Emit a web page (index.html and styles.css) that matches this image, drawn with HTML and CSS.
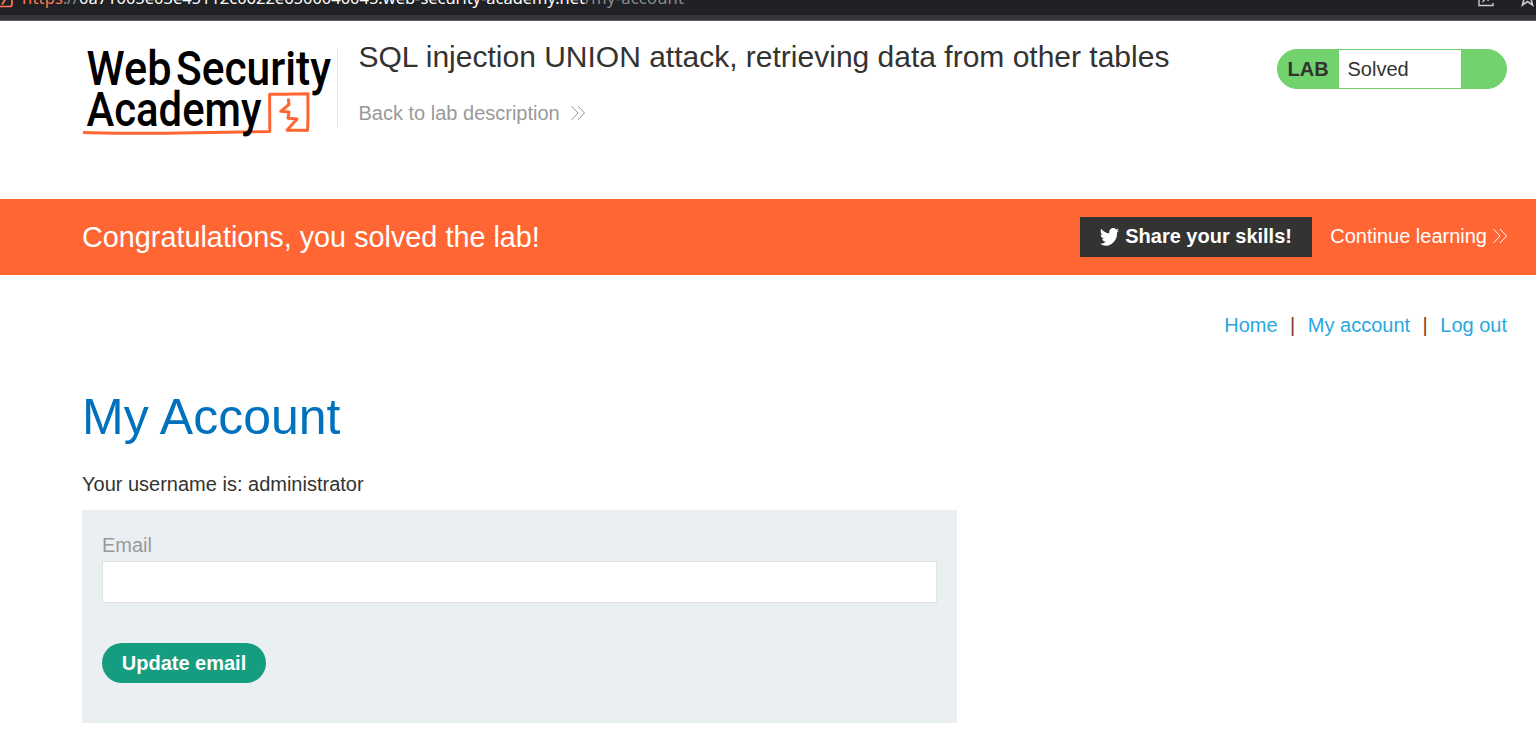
FILE: index.html
```
<!DOCTYPE html>
<html lang="en">
<head>
<meta charset="utf-8">
<title>SQL injection UNION attack, retrieving data from other tables</title>
<link rel="stylesheet" href="styles.css">
</head>
<body>
<div class="browser-bar">
  <svg class="browser-art" viewBox="0 0 1536 15" width="1536" height="15">
    <path d="M-4 6.500H10Q12 6.500 12 4V-3" fill="none" stroke="#ff7a50" stroke-width="1.700"/>
    <path d="M2 4.500L5.500 -1" fill="none" stroke="#ff7a50" stroke-width="1.700"/>
    <text class="url url-scheme" x="22" y="4" textLength="41">https</text>
    <text class="url url-path" x="63" y="4" textLength="16">://</text>
    <text class="url url-host" x="79" y="4" textLength="506">0a71005e03e45112c0622e6500040045.web-security-academy.net</text>
    <text class="url url-path" x="585" y="4" textLength="99">/my-account</text>
    <path d="M1479 -3V5.500H1493V3M1482.500 2L1486 -2M1487 0H1489" fill="none" stroke="#c8c9cb" stroke-width="1.400"/>
    <path d="M1524 -1L1522.500 5L1527.500 1.500L1532.500 5L1531 -1" fill="none" stroke="#c8c9cb" stroke-width="1.700"/>
  </svg>
</div>
<header class="header">
  <svg class="logo" viewBox="82 45 250 92" width="250" height="92" role="img" aria-label="Web Security Academy">
    <path class="logo-line" d="M83 132.600C110 133.800 140 133.500 180 133C215 132.600 240 132 269.800 131.400L269.600 94.300C282 94.600 295 93.700 308 93.700C307.600 106 308.500 118 307.500 130.400C300 130 294 130.700 287 130.200L297 119L288 118.200L289 112L280.700 111.300L289 104.500L288.200 98.500"/>
    <text class="logo-text" x="86.500" y="85.200" textLength="85" lengthAdjust="spacingAndGlyphs">Web</text>
    <text class="logo-text" x="176" y="85.200" textLength="155" lengthAdjust="spacingAndGlyphs">Security</text>
    <text class="logo-text" x="86.500" y="126" textLength="175" lengthAdjust="spacingAndGlyphs">Academy</text>
  </svg>
  <div class="title-box">
    <h2 class="lab-title">SQL injection UNION attack, retrieving data from other tables</h2>
    <a class="back-link">Back to lab description
      <svg class="chevrons" viewBox="0 0 16 16" width="16" height="16"><path d="M1.500 1L8 8L1.500 15M8 1L14.500 8L8 15"/></svg>
    </a>
  </div>
  <div class="lab-status"><b class="lab-label">LAB</b><span class="lab-state">Solved</span></div>
</header>
<section class="banner">
  <h4 class="banner-text">Congratulations, you solved the lab!</h4>
  <a class="share">
    <svg class="bird" viewBox="0 0 24 20" preserveAspectRatio="none" width="19" height="18"><path d="M24 2.400a10 10 0 0 1-2.800.8A5 5 0 0 0 23.300.4a10 10 0 0 1-3.100 1.200 4.900 4.900 0 0 0-8.400 4.500A14 14 0 0 1 1.700.9a4.900 4.900 0 0 0 1.500 6.600A5 5 0 0 1 1 6.900v.1a4.900 4.900 0 0 0 4 4.800 5 5 0 0 1-2.300.1 4.900 4.900 0 0 0 4.600 3.400A10 10 0 0 1 0 17.400a14 14 0 0 0 21.500-12.400A10 10 0 0 0 24 2.400z"/></svg>
    Share your skills!
  </a>
  <a class="continue">Continue learning
    <svg class="chevrons" viewBox="0 0 16 16" width="16" height="16"><path d="M1.500 1L8 8L1.500 15M8 1L14.500 8L8 15"/></svg>
  </a>
</section>
<main class="main">
  <nav class="nav"><a>Home</a><span>|</span><a>My account</a><span>|</span><a>Log out</a></nav>
  <h1 class="heading">My Account</h1>
  <p class="username">Your username is: administrator</p>
  <form class="form">
    <label class="label" for="email">Email</label>
    <input class="input" id="email" type="email">
    <button class="button" type="button">Update email</button>
  </form>
</main>
</body>
</html>
```

FILE: styles.css
```
* { box-sizing: border-box; }
body {
  margin: 0;
  height: 750px;
  overflow: hidden;
  background: #fff;
  color: #333332;
  font-family: "Liberation Sans", Arial, sans-serif;
  font-size: 20px;
  line-height: 24px;
}
h1, h2, h4, p { margin: 0; font-weight: 400; }
.browser-bar {
  height: 21px;
  background: #35363a;
  border-bottom: 1px solid #5b5b60;
}
.browser-art { display: block; background: #202124; }
.url { font-family: "Noto Sans", sans-serif; font-size: 16.5px; }
.url-scheme { fill: #ff7a50; }
.url-host { fill: #fff; }
.url-path { fill: #8b8c8f; }
.header {
  display: flex;
  align-items: flex-start;
  height: 178px;
  padding: 24px 29px 0 82px;
}
.logo { flex: none; }
.logo-text { font-family: Roboto, sans-serif; font-size: 48px; font-weight: 500; fill: #000; }
.logo-line { fill: none; stroke: #ff6633; stroke-width: 3; stroke-linejoin: round; }
.title-box {
  flex: 1;
  height: 79px;
  margin: 4px 0 0 5px;
  padding-left: 20.5px;
  border-left: 1px solid #e5e5e5;
}
.lab-title { margin-top: -10px; font-size: 30px; line-height: 36px; white-space: nowrap; }
.back-link { display: flex; align-items: center; gap: 10px; margin-top: 26px; color: #999; }
.chevrons { fill: none; stroke: currentColor; stroke-width: 1; }
.lab-status {
  display: flex;
  width: 230px;
  height: 40px;
  margin-top: 4px;
  border: 1px solid #72d26e;
  border-radius: 20px;
  background: #72d26e;
  line-height: 39px;
}
.lab-label { width: 61px; padding-left: 9.5px; }
.lab-state { width: 122px; padding-left: 8.5px; background: #fff; }
.banner {
  display: flex;
  align-items: center;
  height: 76px;
  padding: 0 28px 0 82px;
  background: #ff6633;
  color: #fff;
}
.banner-text { flex: 1; font-size: 28.8px; }
.share {
  display: flex;
  align-items: center;
  gap: 6px;
  width: 232px;
  height: 40px;
  padding: 0 0 2px 20px;
  background: #333332;
  font-weight: 700;
  white-space: nowrap;
}
.bird { margin-top: 2px; fill: #fff; }
.continue { display: flex; align-items: center; gap: 5px; margin-left: 18px; padding-bottom: 2px; }
.main { padding: 38px 29px 0 82px; }
.nav { display: flex; justify-content: flex-end; gap: 12.5px; color: #29a7de; }
.nav span { color: #803c20; }
.heading { margin-top: 51px; font-size: 50px; line-height: 58px; color: #0071bc; }
.username { margin-top: 26px; }
.form {
  width: 875px;
  height: 213px;
  margin-top: 14px;
  padding: 23px 20px;
  background: #eaeff2;
}
.label { display: block; color: #999; }
.input { display: block; width: 835px; height: 42px; margin-top: 4px; border: 1px solid #e3e3e3; background: #fff; }
.button {
  display: block;
  width: 164px;
  height: 40px;
  margin-top: 40px;
  border: 0;
  border-radius: 20px;
  background: #169c7f;
  color: #fff;
  font: 700 20px "Liberation Sans", Arial, sans-serif;
}
```
